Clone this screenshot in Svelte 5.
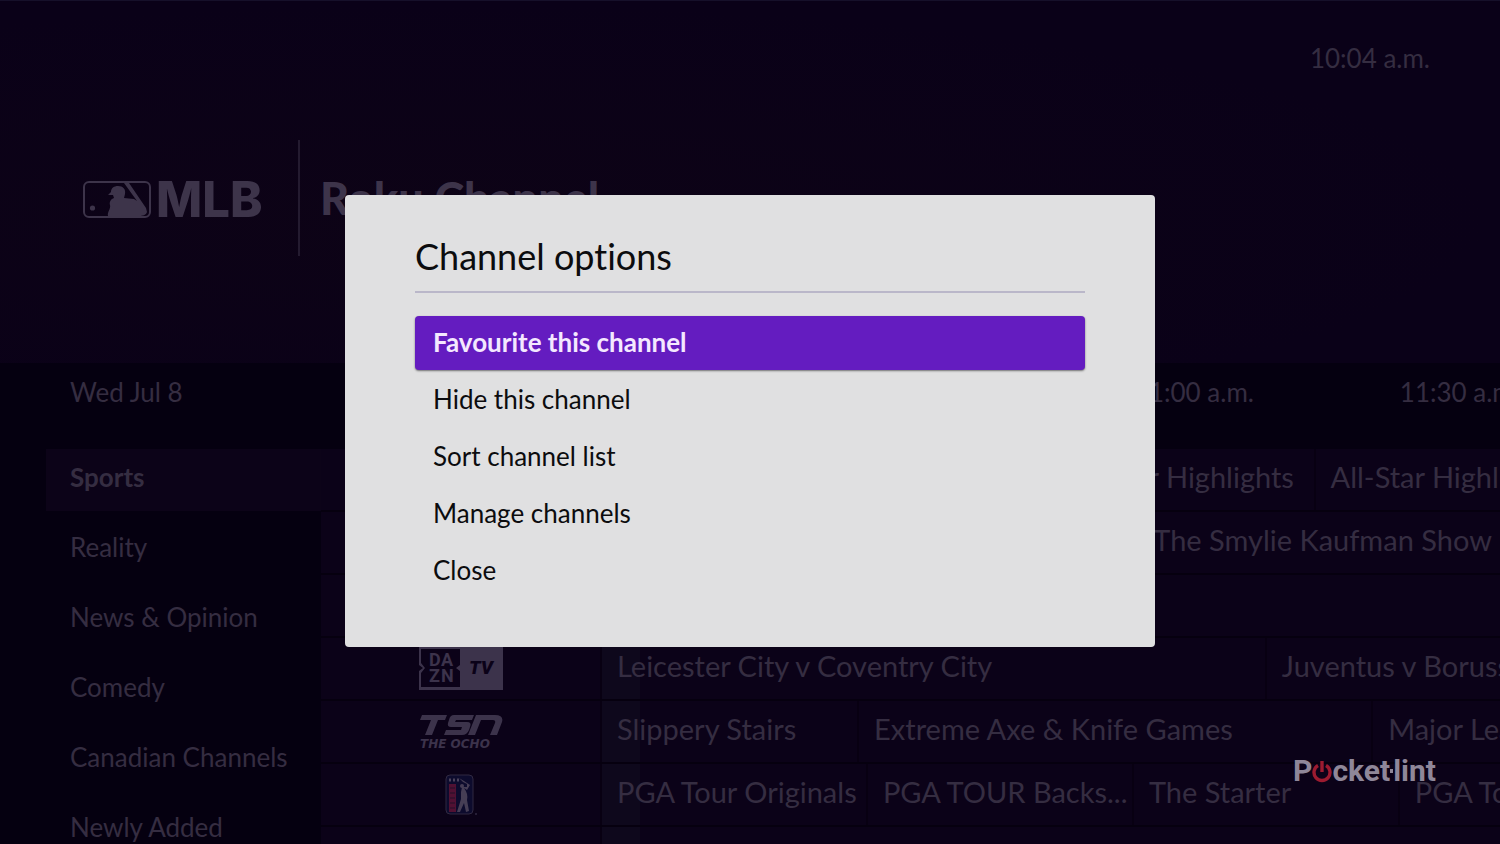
<script>
  const categories = ['Sports', 'Reality', 'News & Opinion', 'Comedy', 'Canadian Channels', 'Newly Added'];

  // Minutes of programming visible in the guide window, starting at 10:00.
  const visibleMinutes = 101.3;
  const share = (minutes) => `${(minutes / visibleMinutes) * 100}%`;

  const times = ['10:00 a.m.', '10:30 a.m.', '11:00 a.m.', '11:30 a.m.'];

  const rows = [
    { logo: '', shows: [[50.5, ''], [30, 'All-Star Highlights'], [30, 'All-Star Highlights']] },
    { logo: '', shows: [[60.5, ''], [60, 'The Smylie Kaufman Show']] },
    { logo: '', shows: [[120, '']] },
    { logo: 'dazn', shows: [[75, 'Leicester City v Coventry City'], [60, 'Juventus v Borussia Dortmund']] },
    { logo: 'tsn', shows: [[29, 'Slippery Stairs'], [58, 'Extreme Axe & Knife Games'], [60, 'Major League Eating']] },
    { logo: 'pga', shows: [[30, 'PGA Tour Originals'], [30, 'PGA TOUR Backs...'], [30, 'The Starter'], [60, 'PGA Tour Originals']] },
    { logo: '', shows: [[120, '']] }
  ];

  const options = ['Favourite this channel', 'Hide this channel', 'Sort channel list', 'Manage channels', 'Close'];
  let selected = $state(0);
</script>

<div class="screen">
  <header class="hero">
    <time class="clock">10:04 a.m.</time>
    <div class="brand">
      <div class="mlb">
        <svg width="69" height="38" viewBox="0 0 69 38" aria-hidden="true">
          <rect x="1" y="1" width="66" height="35" rx="5" fill="none" stroke="currentColor" stroke-width="2" />
          <circle cx="9.500" cy="27" r="2.600" fill="currentColor" />
          <path fill="currentColor" d="M25 35C24 31 28 28 27 24C26 21 28 18 31 17L30 14L25 14L28 11C28 7 31 5 35 5C40 5 43 8 42 13L41 17L51 18L54 20L41 2L46 2L63 27L64 31C63 34 60 35 56 35Z" />
        </svg>
        <span>MLB</span>
      </div>
      <div class="rule"></div>
      <div class="roku">Roku Channel</div>
    </div>
  </header>

  <main class="guide">
    <div class="timeline">
      <span class="date">Wed Jul 8</span>
      <div class="times">
        {#each times as time}
          <time style:width={share(30)}>{time}</time>
        {/each}
      </div>
    </div>

    <div class="listing">
      <nav class="categories">
        {#each categories as category, i}
          <a href="#guide" class:current={i === 0}>{category}</a>
        {/each}
      </nav>

      <div class="rows" id="guide">
        {#each rows as row}
          <div class="row">
            <div class="channel">
              {#if row.logo === 'dazn'}
                <svg width="84" height="44" viewBox="0 0 84 44" role="img" aria-label="DAZN TV">
                  <path fill="currentColor" d="M0 0H84V43H0V24L4 21L0 18Z" />
                  <path fill="#0b0218" d="M2 2H41V18L37 21L41 24V40H2V26L6 21L2 16Z" />
                  <g font-family="Roboto, sans-serif" font-weight="700" fill="currentColor">
                    <text x="10" y="19" font-size="18">D</text><text x="22" y="19" font-size="18">A</text>
                    <text x="10" y="35" font-size="18">Z</text><text x="22" y="35" font-size="18">N</text>
                    <text x="50" y="27" font-size="19" font-weight="900" font-style="italic" fill="#0b0218">TV</text>
                  </g>
                </svg>
              {:else if row.logo === 'tsn'}
                <svg width="84" height="36" viewBox="0 0 84 36" role="img" aria-label="TSN The Ocho">
                  <g fill="currentColor">
                    <path d="M3 1H28L26 6H19L13 21H6L12 6H1Z" />
                    <path d="M33 1H55L53 6H37L36 8H48Q53 8 51 13L50 16Q48 21 43 21H25L27 16H42L43 13H32Q28 13 29 9L30 6Q31 1 35 1Z" />
                    <path d="M57 1H76Q85 1 83 8L78 21H71L76 9Q77 6 74 6H62L56 21H49Z" />
                  </g>
                  <text x="1" y="34" font-family="DejaVu Sans, sans-serif" font-size="12" font-weight="700" font-style="italic" fill="currentColor">THE OCHO</text>
                </svg>
              {:else if row.logo === 'pga'}
                <svg width="32" height="42" viewBox="0 0 32 42" role="img" aria-label="PGA Tour">
                  <rect x="1" y="1" width="27" height="39" rx="4" fill="#0d0b2d" stroke="#302941" />
                  <rect x="4" y="10" width="7" height="28" fill="#511133" />
                  <path d="M5 14H10M5 19H10M5 24H10M5 29H10M5 34H10" stroke="#25102b" stroke-width="1" />
                  <path d="M4 6H6M8 6H10M12 6H14" stroke="#4b425b" stroke-width="3" />
                  <path d="M14 4L19 7L25 11L22 16L19 14C22 18 23 22 22 26L24 37L21 38L19 29L15 38L12 38L16 25L16 18L17 13L22 13L22 10L18 8Z" fill="#463e55" />
                  <circle cx="17" cy="12" r="2" fill="#463e55" />
                  <circle cx="31" cy="40" r="1" fill="#302941" />
                </svg>
              {/if}
            </div>
            <div class="shows">
              <div class="elapsed" style:width={share(4.3)}></div>
              {#each row.shows as [minutes, title]}
                <div class="show" style:width={share(minutes)}>{title}</div>
              {/each}
            </div>
          </div>
        {/each}
      </div>
    </div>
  </main>

  <div class="overlay">
    <div class="dialog" role="dialog" aria-labelledby="dialog-title">
      <h1 id="dialog-title">Channel options</h1>
      <div class="options">
        {#each options as option, i}
          <button class:selected={selected === i} onclick={() => (selected = i)}>{option}</button>
        {/each}
      </div>
    </div>
  </div>

  <div class="watermark" role="img" aria-label="Pocket-lint">
    <span>P</span>
    <svg width="20" height="24" viewBox="0 0 20 24" aria-hidden="true">
      <path d="M6 6.500A8 8 0 1 0 14 6.500M10 2V13" fill="none" stroke="#9c1b30" stroke-width="3.400" />
    </svg>
    <span>cket</span><i></i><span>lint</span>
  </div>
</div>

<style>
  :global(body) {
    margin: 0;
    background: #050010;
  }

  .screen {
    position: relative;
    display: flex;
    flex-direction: column;
    height: 100vh;
    overflow: hidden;
    background: #050010;
    color: #352d41;
    font-family: Lato, "Noto Sans", sans-serif;
    font-size: 26px;
    font-variant-ligatures: none;
    line-height: 32px;
    white-space: nowrap;
  }

  .hero {
    flex: none;
    box-sizing: border-box;
    height: 363px;
    padding: 41px 70px 0 83px;
    background: radial-gradient(ellipse at 30% 60%, #0d0316, #0a0118 70%);
    border-top: 1px solid #16102a;
  }

  .clock {
    display: block;
    text-align: right;
  }

  .brand {
    display: flex;
    align-items: center;
    margin-top: 66px;
    color: #3d344a;
  }

  .mlb {
    display: flex;
    align-items: center;
    gap: 4px;
    width: 215px;
    padding-top: 4px;
    font: 800 49px/56px Inter, sans-serif;
  }

  .rule {
    width: 2px;
    height: 116px;
    margin-right: 20px;
    background: #241b30;
  }

  .roku {
    font: 900 45px/56px Lato, sans-serif;
  }

  .guide {
    flex: 1;
    min-height: 0;
  }

  .timeline {
    display: flex;
    height: 86px;
    padding-top: 13px;
    box-sizing: border-box;
  }

  .date {
    flex: none;
    box-sizing: border-box;
    width: 602px;
    padding-left: 70px;
  }

  .times,
  .shows {
    display: flex;
    flex: 1;
    min-width: 0;
    overflow: hidden;
  }

  .times time {
    flex: none;
  }

  .listing {
    display: flex;
    padding-left: 46px;
  }

  .categories {
    flex: none;
    display: flex;
    flex-direction: column;
    gap: 8px;
    width: 275px;
  }

  .categories a {
    padding: 12px 24px 18px;
    color: inherit;
    text-decoration: none;
  }

  .categories a.current {
    background: #0c0318;
    font-weight: 700;
  }

  .rows {
    flex: 1;
    min-width: 0;
  }

  .row {
    display: flex;
    box-sizing: border-box;
    height: 63px;
    border-bottom: 2px solid #06000f;
    background: #0b0218;
  }

  .channel {
    flex: none;
    display: flex;
    align-items: center;
    justify-content: center;
    width: 279px;
    border-right: 2px solid #080012;
    color: #3c334b;
  }

  .shows {
    position: relative;
  }

  .elapsed {
    position: absolute;
    inset: 0 auto 0 0;
    background: #0e081c;
  }

  .show {
    position: relative;
    flex: none;
    box-sizing: border-box;
    padding: 12px 0 0 15px;
    border-right: 2px solid #080012;
    overflow: hidden;
    font-size: 29px;
  }

  .overlay {
    position: absolute;
    inset: 0;
    display: grid;
    place-items: center;
    padding-bottom: 2px;
  }

  .dialog {
    box-sizing: border-box;
    width: 54%;
    padding: 38px 70px 49px;
    border-radius: 4px;
    background: #e0e0e1;
    color: #0c0c0e;
  }

  h1 {
    margin: 0 0 23px;
    padding-bottom: 11px;
    border-bottom: 2px solid #bab7c9;
    font-size: 36px;
    font-weight: 400;
    line-height: 47px;
  }

  .options {
    display: flex;
    flex-direction: column;
    gap: 3px;
  }

  button {
    height: 54px;
    padding: 0 18px 3px;
    border: 0;
    border-radius: 4px;
    background: none;
    color: inherit;
    font: inherit;
    text-align: left;
  }

  button.selected {
    background: #641cc0;
    box-shadow: 0 1px 2px #00000080;
    color: #f4e8ff;
    font-weight: 700;
  }

  .watermark {
    position: absolute;
    right: 64px;
    bottom: 57px;
    display: flex;
    align-items: center;
    color: #8f8799;
    font: 700 30px/32px Roboto, sans-serif;
  }

  .watermark i {
    width: 3px;
    height: 4px;
    background: currentColor;
  }
</style>
